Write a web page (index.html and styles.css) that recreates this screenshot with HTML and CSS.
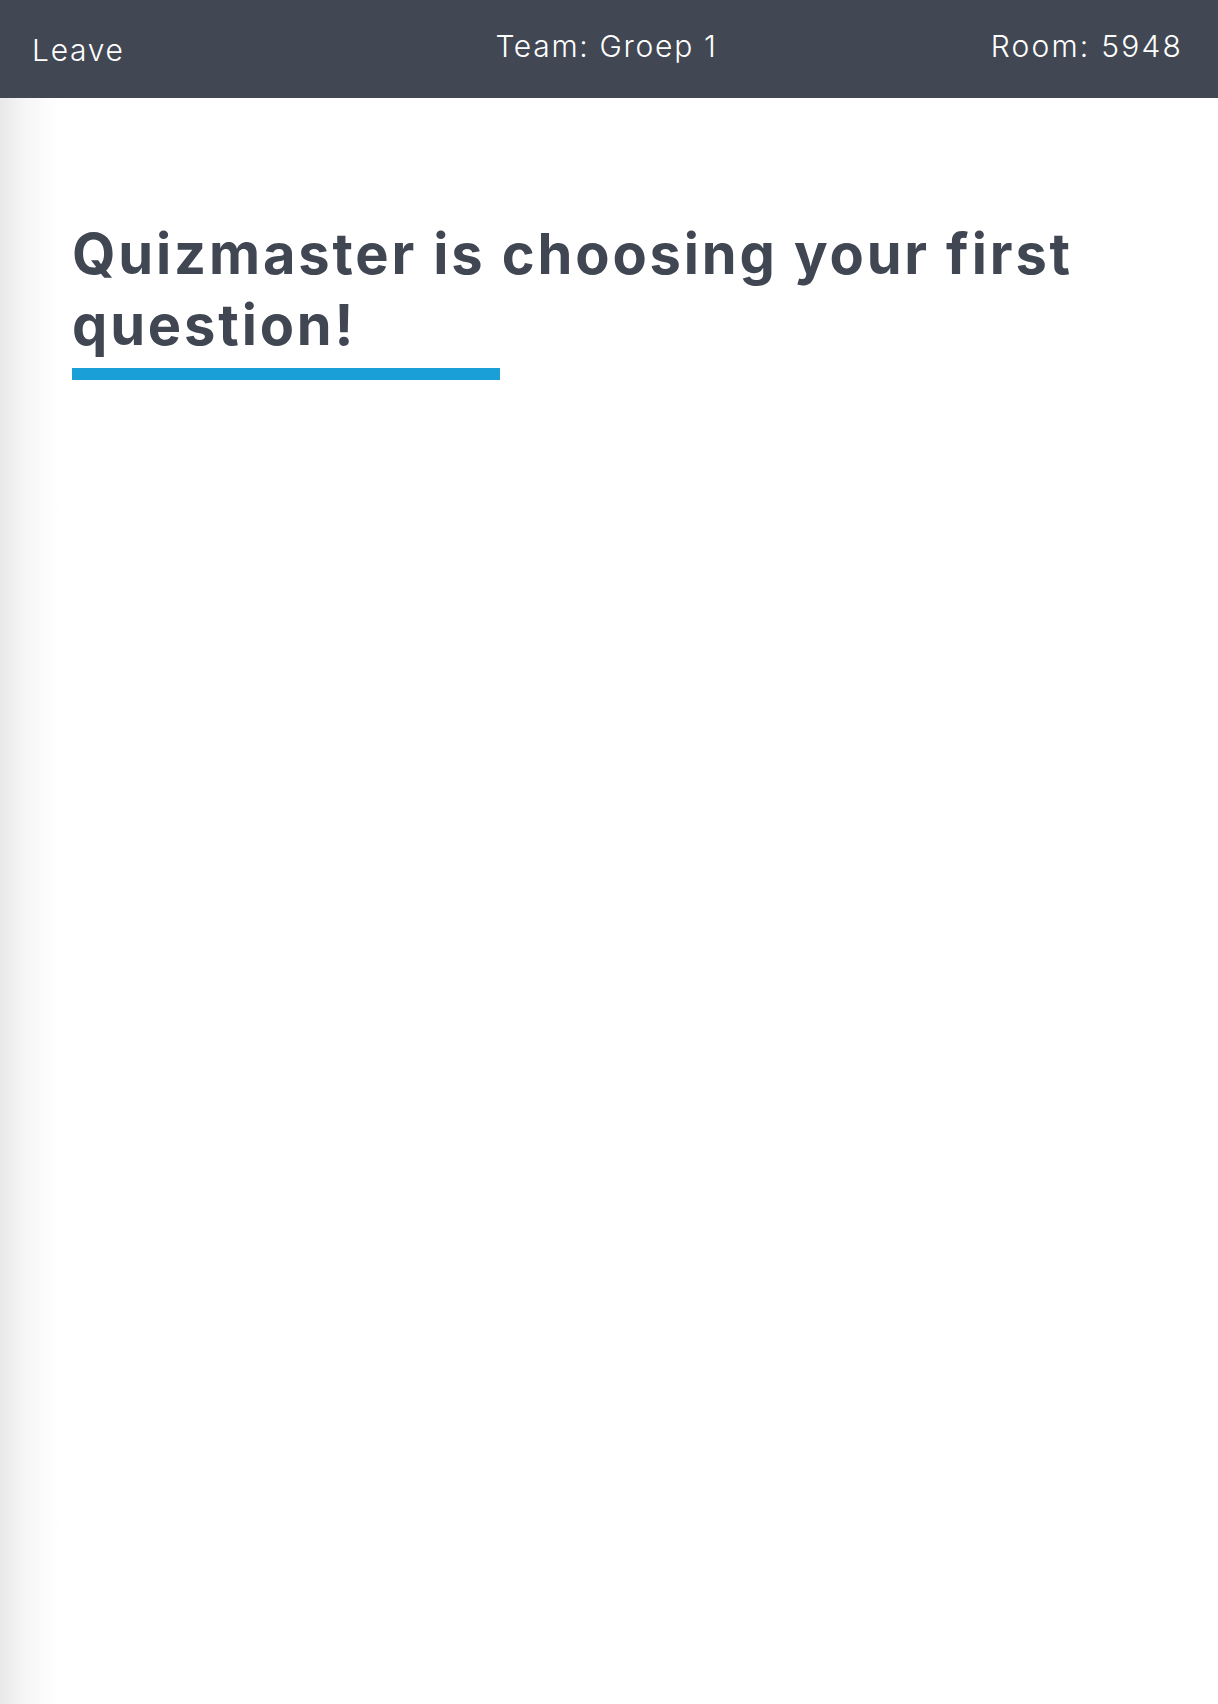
FILE: index.html
```html
<!DOCTYPE html>
<html lang="en">
<head>
<meta charset="utf-8">
<title>Quiz</title>
<link rel="stylesheet" href="styles.css">
</head>
<body>
<header class="topbar">
  <a class="topbar-leave" href="#">Leave</a>
  <div class="topbar-team">Team: Groep 1</div>
  <div class="topbar-room">Room: 5948</div>
</header>
<main class="content">
  <h1 class="title">Quizmaster is choosing your first question!</h1>
  <div class="title-bar"></div>
</main>
</body>
</html>
```
FILE: styles.css
```css
html, body {
  margin: 0;
  padding: 0;
  height: 100%;
}
body {
  font-family: Inter, "Noto Sans", sans-serif;
  background: #fff;
  display: flex;
  flex-direction: column;
}
.topbar {
  height: 98px;
  flex: none;
  background: #414753;
  color: #fff;
  display: grid;
  grid-template-columns: 1fr auto 1fr;
  align-items: center;
  padding: 0 37px 0 32px;
  font-size: 30px;
  font-weight: 300;
  letter-spacing: 1.7px;
}
.topbar-leave {
  color: #fff;
  text-decoration: none;
  justify-self: start;
  padding-top: 2px;
}
.topbar-team {
  justify-self: center;
  padding-bottom: 6px;
}
.topbar-room {
  justify-self: end;
  padding-bottom: 6px;
  letter-spacing: 2.2px;
  margin-right: -2px;
}
.content {
  flex: 1;
  background: linear-gradient(to right, #e9e9e9 0px, #f6f6f6 25px, #fdfdfd 50px, #fff 62px);
  padding: 121px 72px 0 72px;
}
.title {
  margin: 0;
  color: #404753;
  font-size: 56px;
  line-height: 71px;
  font-weight: 700;
  letter-spacing: 2.85px;
}
.title-bar {
  margin-top: 7px;
  width: 428px;
  height: 12px;
  background: #1a9fd6;
}
```
